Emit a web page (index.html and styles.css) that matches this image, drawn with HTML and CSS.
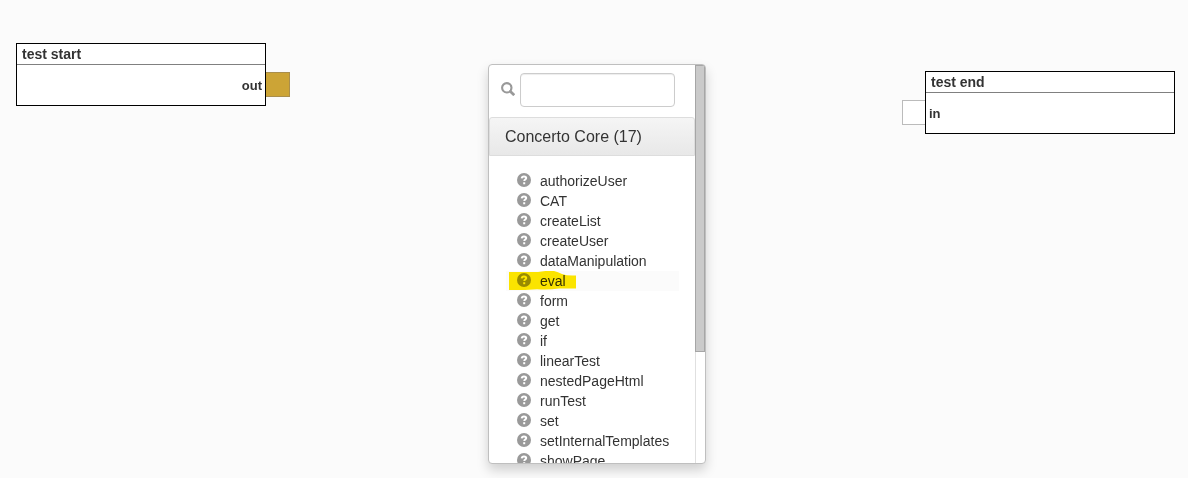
FILE: index.html
```html
<!DOCTYPE html>
<html lang="en">
<head>
<meta charset="utf-8">
<title>Test flow</title>
<link rel="stylesheet" href="styles.css">
</head>
<body>
<svg class="defs" aria-hidden="true">
  <symbol id="help" viewBox="0 0 14 14">
    <circle cx="7" cy="7" r="7" fill="#999"/>
    <path d="M4.7 5.4C4.8 4 5.7 3.4 7 3.4c1.4 0 2.2.6 2.2 1.7 0 1.4-1.9 1.4-1.9 2.8" fill="none" stroke="#fff" stroke-width="2"/>
    <path d="M6.2 9.2h2v2h-2z" fill="#fff"/>
  </symbol>
</svg>
<main class="flow">
  <section class="node node-start">
    <h2 class="node-title">test start</h2>
    <div class="node-body node-body-out">out</div>
    <span class="port port-out"></span>
  </section>
  <section class="node node-end">
    <h2 class="node-title">test end</h2>
    <div class="node-body">in</div>
    <span class="port port-in"></span>
  </section>
  <aside class="menu">
    <div class="menu-content">
      <div class="search">
        <svg class="search-icon" viewBox="0 0 14 14"><circle cx="5.8" cy="5.8" r="4.7" fill="none" stroke="#999" stroke-width="2.1"/><path d="M9.2 9.2l4 4" stroke="#999" stroke-width="2.7"/></svg>
        <input class="search-input" type="text" aria-label="Search">
      </div>
      <h3 class="group-title">Concerto Core (17)</h3>
      <ul class="items">
        <li class="item"><svg class="help"><use href="#help"/></svg>authorizeUser</li>
        <li class="item"><svg class="help"><use href="#help"/></svg>CAT</li>
        <li class="item"><svg class="help"><use href="#help"/></svg>createList</li>
        <li class="item"><svg class="help"><use href="#help"/></svg>createUser</li>
        <li class="item"><svg class="help"><use href="#help"/></svg>dataManipulation</li>
        <li class="item item-active"><svg class="help"><use href="#help"/></svg>eval
          <svg class="marker" viewBox="0 0 68 20"><path d="M0 1H29Q36-.5 45 0Q49 1 53 3Q58 5 67 4.5V17.5L50 17.5Q40 19 28 18.2L16 19L0 19Z" fill="#ffe800"/></svg>
        </li>
        <li class="item"><svg class="help"><use href="#help"/></svg>form</li>
        <li class="item"><svg class="help"><use href="#help"/></svg>get</li>
        <li class="item"><svg class="help"><use href="#help"/></svg>if</li>
        <li class="item"><svg class="help"><use href="#help"/></svg>linearTest</li>
        <li class="item"><svg class="help"><use href="#help"/></svg>nestedPageHtml</li>
        <li class="item"><svg class="help"><use href="#help"/></svg>runTest</li>
        <li class="item"><svg class="help"><use href="#help"/></svg>set</li>
        <li class="item"><svg class="help"><use href="#help"/></svg>setInternalTemplates</li>
        <li class="item"><svg class="help"><use href="#help"/></svg>showPage</li>
      </ul>
    </div>
    <div class="scroll-track"><div class="scroll-thumb"></div></div>
  </aside>
</main>
</body>
</html>
```
FILE: styles.css
```css
* { box-sizing: border-box; }
body {
  margin: 0;
  background: #fbfbfb;
  color: #333;
  font-family: "Liberation Sans", Arial, sans-serif;
  font-size: 14px;
}
.defs { position: absolute; width: 0; height: 0; }
.flow { position: relative; height: 478px; overflow: hidden; }

.node {
  position: absolute;
  width: 250px;
  height: 63px;
  border: 1px solid #000;
  background: #fff;
}
.node-start { left: 16px; top: 43px; }
.node-end { left: 925px; top: 71px; }
.node-title {
  margin: 0;
  height: 21px;
  padding-left: 5px;
  border-bottom: 1px solid #808080;
  font-size: 14px;
  line-height: 20px;
}
.node-body {
  height: 40px;
  padding: 0 3px;
  font-weight: bold;
  font-size: 13px;
  line-height: 41px;
}
.node-body-out { text-align: right; }
.port { position: absolute; top: 28px; height: 25px; }
.port-out {
  left: 249px;
  width: 24px;
  border: 1px solid #a98e4c;
  border-left: 0;
  background: #cca436;
}
.port-in {
  left: -24px;
  width: 23px;
  border: 1px solid #bbb;
  border-right: 0;
  background: #fff;
}

.menu {
  position: absolute;
  left: 488px;
  top: 64px;
  display: flex;
  width: 218px;
  height: 400px;
  border: 1px solid #bfbfbf;
  border-radius: 4px;
  background: #fff;
  box-shadow: 0 6px 12px rgba(0, 0, 0, .175);
  overflow: hidden;
}
.menu-content { flex: none; width: 206px; height: 398px; overflow: hidden; }
.search {
  display: flex;
  align-items: flex-start;
  gap: 5px;
  padding: 8px 0 10px 12px;
}
.search-icon { width: 14px; height: 14px; margin-top: 9px; }
.search-input {
  width: 155px;
  height: 34px;
  padding: 6px 12px;
  border: 1px solid #ccc;
  border-radius: 4px;
  background: #fff;
  box-shadow: inset 0 1px 1px rgba(0, 0, 0, .075);
}
.group-title {
  margin: 0;
  height: 39px;
  padding-left: 15px;
  border: 1px solid #ddd;
  border-radius: 3px 3px 0 0;
  background: linear-gradient(#f5f5f5, #e8e8e8);
  font-size: 16px;
  font-weight: normal;
  line-height: 37px;
}
.items { margin: 0; padding: 15px 16px 0 17px; list-style: none; }
.item {
  position: relative;
  display: flex;
  align-items: center;
  gap: 9px;
  height: 20px;
  padding-left: 11px;
  line-height: 20px;
  white-space: nowrap;
}
.help { flex: none; width: 14px; height: 14px; margin-top: -2px; }
.item-active { background: #fbfbfb; }
.marker {
  position: absolute;
  left: 3px;
  top: 0;
  width: 68px;
  height: 20px;
  mix-blend-mode: multiply;
}
.scroll-track { flex: none; width: 10px; box-shadow: inset 1px 0 #e0e0e0; }
.scroll-thumb {
  height: 287px;
  border: 1px solid #a6a6a6;
  background: #cacaca;
}
```
